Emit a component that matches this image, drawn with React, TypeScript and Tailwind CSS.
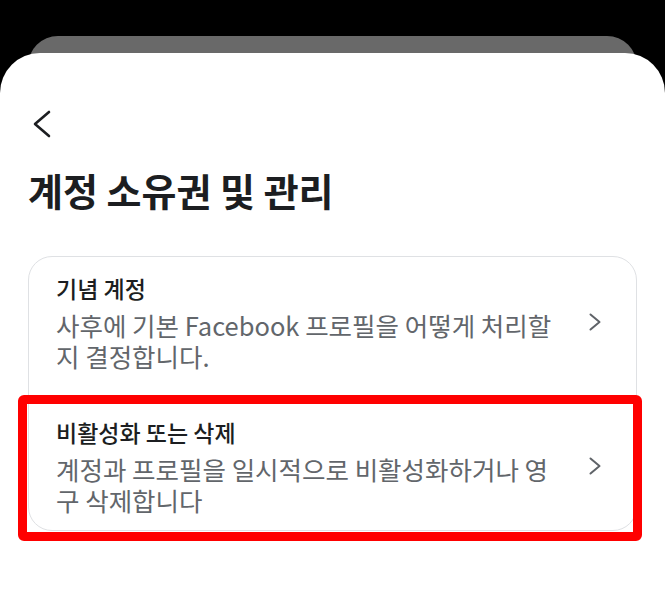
const items = [
  {
    title: "기념 계정",
    lines: ["사후에 기본 Facebook 프로필을 어떻게 처리할", "지 결정합니다."],
    pad: "pt-[16px] pb-[23px]",
  },
  {
    title: "비활성화 또는 삭제",
    lines: ["계정과 프로필을 일시적으로 비활성화하거나 영", "구 삭제합니다"],
    pad: "pt-[23px] pb-[15px]",
  },
];

function RightChevron() {
  return (
    <svg width="14" height="18" viewBox="0 0 14 18" fill="none" className="shrink-0">
      <path d="M2.5 1.5 L11.5 9 L2.5 16.5" stroke="#5f6368" strokeWidth="2" strokeLinecap="round" strokeLinejoin="round" />
    </svg>
  );
}

function BackChevron() {
  return (
    <svg width="20" height="28" viewBox="0 0 20 28" fill="none">
      <path d="M17 2 L3 14 L17 26" stroke="#1c1e21" strokeWidth="2.6" strokeLinecap="round" strokeLinejoin="round" />
    </svg>
  );
}

export default function App() {
  return (
    <div
      className="h-[615px] w-[665px] overflow-hidden bg-black pt-[36px]"
      style={{ fontFamily: '"Noto Sans CJK KR", "Noto Sans", sans-serif' }}
    >
      <div className="mx-[28px] h-[30px] rounded-t-[30px] bg-[#696969]" />

      <div className="relative -mt-[13px] h-[600px] rounded-t-[40px] bg-white pt-[57px]">
        <div className="pl-[32px]">
          <BackChevron />
        </div>

        <h1 className="mt-[28px] pl-[28px] text-[38px] font-bold leading-[48px] text-[#1c1e21]">
          계정 소유권 및 관리
        </h1>

        <div className="mx-[28px] mt-[42px] rounded-[24px] border border-[#dfe1e4] bg-white">
          {items.map((item) => (
            <div key={item.title} className={`flex items-center pl-[27px] pr-[34px] ${item.pad}`}>
              <div className="flex-1">
                <p className="text-[23px] font-medium leading-[30px] text-[#1c1e21]">{item.title}</p>
                <div className="mt-[6px] whitespace-nowrap text-[25.5px] leading-[31px] text-[#62666b]">
                  <p>{item.lines[0]}</p>
                  <p>{item.lines[1]}</p>
                </div>
              </div>
              <RightChevron />
            </div>
          ))}
        </div>

        <div className="absolute left-[18px] top-[342px] h-[146px] w-[624px] rounded-[6px] border-[9px] border-[#ff0000]" />
      </div>
    </div>
  );
}
